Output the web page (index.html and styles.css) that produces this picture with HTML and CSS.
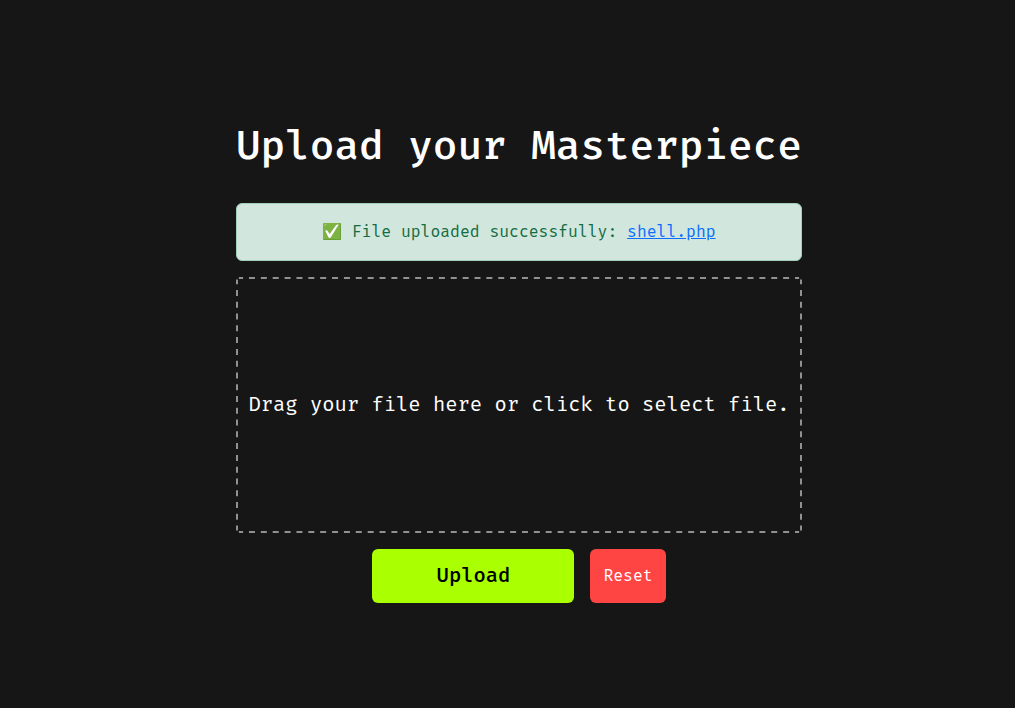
FILE: index.html
```html
<!DOCTYPE html>
<html lang="en">
<head>
<meta charset="utf-8">
<title>Upload</title>
<link rel="stylesheet" href="styles.css">
</head>
<body>
<main class="uploader">
  <h1 class="title">Upload your Masterpiece</h1>
  <div class="alert">
    <svg class="check" viewBox="0 0 20 20"><rect x="1" y="1" width="18" height="17" rx="0.7" fill="#7cb342"/><path d="M1.5 17.5h17V1.5" fill="none" stroke="#689f38" stroke-width="1"/><path d="M2.5 4q.2-1.5 2-1.6" fill="none" stroke="#aed581" stroke-width="1"/><path d="M3.2 8.8q1.5-1 2.4.1L7.7 12 14 3.3q.8-1 2.7-.7L8.9 15.3q-1.3 1.3-2.4 0z" fill="#fff"/></svg>
    <span class="message">File uploaded successfully:</span>
    <a class="link" href="#">shell.php</a>
  </div>
  <div class="dropzone">
    <svg class="outline" viewBox="0 0 566 256">
      <path class="dash-x" d="M3 1H563M3 255H563"/>
      <path class="dash-y" d="M1 2.6V253.4M565 2.6V253.4"/>
      <path class="corner" d="M1.2 2.5L2.5 1.2M563.5 1.2L564.8 2.5M1.2 253.5L2.5 254.8M563.5 254.8L564.8 253.5"/>
    </svg>
    <span class="hint">Drag your file here or click to select file.</span>
  </div>
  <div class="actions">
    <button class="btn upload"><span class="upload-label">Upload</span></button>
    <button class="btn reset"><span class="reset-label">Reset</span></button>
  </div>
</main>
</body>
</html>
```
FILE: styles.css
```css
* { box-sizing: border-box; }
body {
  margin: 0;
  height: 708px;
  background: #161616;
  color: #fff;
  font-family: "Fira Mono", "Fira Code", "DejaVu Sans Mono", monospace;
  overflow: hidden;
}
.uploader { width: 566px; margin-left: 236px; padding-top: 122px; }
.title { margin: 0 0 33px; font-size: 41px; line-height: 48px; font-weight: 500; white-space: nowrap; }
.alert {
  height: 58px; margin-bottom: 16px; padding-bottom: 2px;
  display: flex; align-items: center; justify-content: center; gap: 9.8px;
  background: #d1e7dd; border: 1px solid #a3cfbb; border-radius: 6px;
  color: #146c43; font-size: 16.4px; white-space: nowrap;
}
.check { width: 20px; height: 20px; margin: 2px -0.5px 0 0; }
.link { color: #0d6efd; text-decoration: underline; }
.dropzone {
  position: relative;
  height: 256px; margin-bottom: 16px; padding-bottom: 2px;
  display: flex; align-items: center; justify-content: center;
  font-size: 20.5px; white-space: nowrap;
}
.outline { position: absolute; inset: 0; width: 566px; height: 256px; }
.dash-x, .dash-y { fill: none; stroke: #919191; stroke-width: 2; }
.dash-x { stroke-dasharray: 6 5.87; stroke-dashoffset: 1.9; }
.dash-y { stroke-dasharray: 6 5.78; stroke-dashoffset: 1.4; }
.corner { fill: none; stroke: #444; stroke-width: 1; }
.actions { display: flex; justify-content: center; gap: 16px; }
.btn { height: 54px; padding: 0 0 2px; border: 0; border-radius: 6px; font-family: inherit; }
.upload { width: 202px; padding-left: 1px; background: #af0; color: #000; font-size: 20.5px; font-weight: 500; }
.reset { width: 76px; background: #f44; color: #fff; font-size: 16.4px; }
```
